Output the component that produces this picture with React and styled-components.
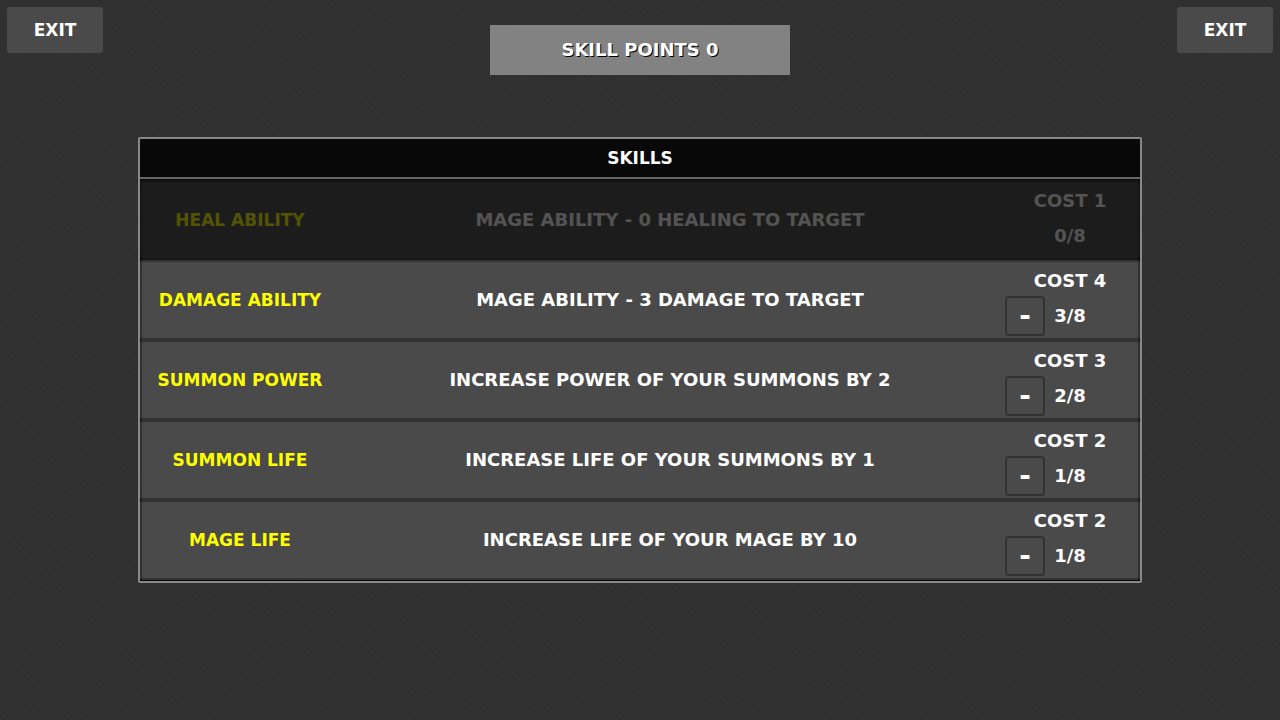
import { useState } from 'react';
import styled, { createGlobalStyle } from 'styled-components';

const initialSkills = [
  {
    id: 'heal',
    name: 'HEAL ABILITY',
    describe: () => 'MAGE ABILITY - 0 HEALING TO TARGET',
    cost: 1,
    level: 0,
  },
  {
    id: 'damage',
    name: 'DAMAGE ABILITY',
    describe: (level) => `MAGE ABILITY - ${level} DAMAGE TO TARGET`,
    cost: 4,
    level: 3,
  },
  {
    id: 'power',
    name: 'SUMMON POWER',
    describe: (level) => `INCREASE POWER OF YOUR SUMMONS BY ${level}`,
    cost: 3,
    level: 2,
  },
  {
    id: 'summon-life',
    name: 'SUMMON LIFE',
    describe: (level) => `INCREASE LIFE OF YOUR SUMMONS BY ${level}`,
    cost: 2,
    level: 1,
  },
  {
    id: 'mage-life',
    name: 'MAGE LIFE',
    describe: (level) => `INCREASE LIFE OF YOUR MAGE BY ${level * 10}`,
    cost: 2,
    level: 1,
  },
];

const maxLevel = 8;

const App = () => {
  const [points, setPoints] = useState(0);
  const [skills, setSkills] = useState(initialSkills);

  // each level above the first raises the price by one
  const lowerSkill = (skill) => {
    setPoints(points + skill.cost - 1);
    setSkills(
      skills.map((item) =>
        item.id === skill.id
          ? { ...item, level: item.level - 1, cost: item.cost - 1 }
          : item
      )
    );
  };

  return (
    <>
      <GlobalStyle />
      <Page>
        <TopBar>
          <ExitButton type='button'>EXIT</ExitButton>
          <Points>SKILL POINTS {points}</Points>
          <ExitButton type='button'>EXIT</ExitButton>
        </TopBar>
        <Panel>
          <PanelTitle id='skills-title'>SKILLS</PanelTitle>
          <SkillTable aria-labelledby='skills-title'>
            <tbody>
              {skills.map((skill) => (
                <SkillRow key={skill.id} $locked={skill.level === 0}>
                  <NameCell scope='row'>{skill.name}</NameCell>
                  <Cell>{skill.describe(skill.level)}</Cell>
                  <CostCell>
                    <Cost>COST {skill.cost}</Cost>
                    <Level>
                      {skill.level > 0 && (
                        <MinusButton
                          type='button'
                          aria-label={`Lower ${skill.name}`}
                          onClick={() => lowerSkill(skill)}
                        >
                          -
                        </MinusButton>
                      )}
                      <Count>
                        {skill.level}/{maxLevel}
                      </Count>
                    </Level>
                  </CostCell>
                </SkillRow>
              ))}
            </tbody>
          </SkillTable>
        </Panel>
      </Page>
    </>
  );
};

export default App;

const GlobalStyle = createGlobalStyle`
  * {
    box-sizing: border-box;
  }
  body {
    margin: 0;
    background: #2f2f2f;
    color: #fff;
  }
  body,
  button {
    font-family: 'DejaVu Sans', sans-serif;
    font-size: 18px;
    font-weight: 700;
    line-height: 20px;
  }
  button {
    padding: 0;
    color: inherit;
    cursor: pointer;
  }
`;

const Page = styled.main`
  min-height: 100vh;
  background:
    repeating-linear-gradient(
      45deg,
      rgba(255, 255, 255, 0.012) 0 2px,
      transparent 2px 5px
    ),
    repeating-linear-gradient(
      125deg,
      rgba(0, 0, 0, 0.05) 0 1px,
      transparent 1px 4px
    ),
    #303030;
`;

const TopBar = styled.header`
  display: flex;
  justify-content: space-between;
  align-items: flex-start;
  padding: 7px;
`;

const ExitButton = styled.button`
  width: 96px;
  height: 46px;
  border: none;
  border-radius: 3px;
  background: #4a4a4a;
  font-size: 17px;
`;

const Points = styled.div`
  display: flex;
  align-items: center;
  justify-content: center;
  width: 300px;
  height: 50px;
  margin-top: 18px;
  background: #828282;
  text-shadow: 1px 1px 0 #000;
`;

const Panel = styled.section`
  width: calc(100% - 40px);
  max-width: 1004px;
  margin: 55px auto 0;
  border: 2px solid #888;
  border-radius: 2px;
  background: #080808;
`;

const PanelTitle = styled.h1`
  margin: 0;
  padding: 9px 0;
  border-bottom: 2px solid #666;
  font-size: 17px;
  line-height: 20px;
  text-align: center;
`;

const SkillTable = styled.table`
  display: block;
  padding: 1px 0;

  tbody {
    display: block;
  }
`;

const SkillRow = styled.tr`
  display: grid;
  grid-template-columns: 20% 66% 14%;
  min-height: 80px;
  border-radius: 4px;
  background: #4a4a4a;
  box-shadow: inset 0 0 0 2px #333;
  opacity: ${({ $locked }) => ($locked ? 0.3 : 1)};
`;

const Cell = styled.td`
  display: flex;
  align-items: center;
  justify-content: center;
  padding: 0;
  text-align: center;
`;

const NameCell = styled(Cell).attrs({ as: 'th' })`
  color: #ff0;
  font-size: 17px;
`;

const CostCell = styled.td`
  padding: 6px 5px 4px;
  text-align: center;
`;

const Cost = styled.div`
  line-height: 30px;
`;

const Level = styled.div`
  display: grid;
  grid-template-columns: 40px 1fr 40px;
  align-items: center;
  height: 40px;
`;

const MinusButton = styled.button`
  display: flex;
  align-items: center;
  justify-content: center;
  height: 40px;
  border: 2px solid #333;
  border-radius: 4px;
  background: #4a4a4a;
  font-size: 28px;
`;

const Count = styled.span`
  grid-column: 2;
`;
